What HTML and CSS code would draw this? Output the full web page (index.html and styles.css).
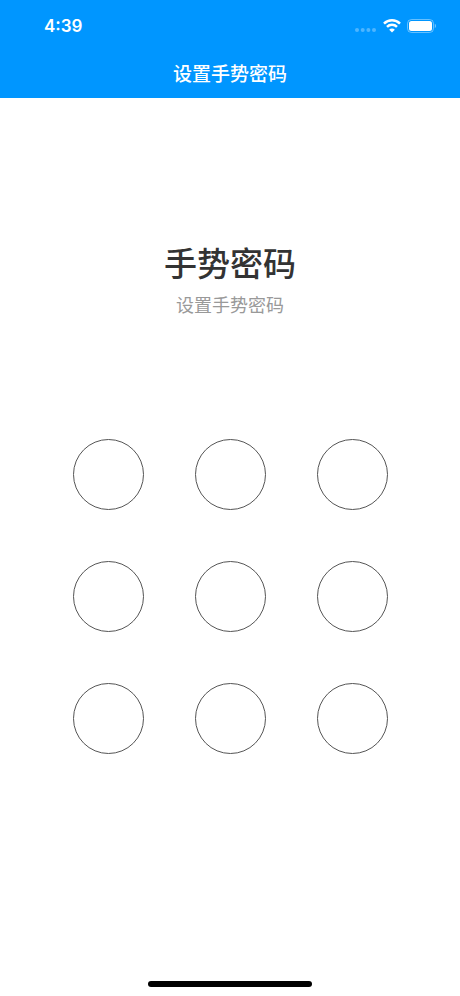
FILE: index.html
```
<!DOCTYPE html>
<html lang="zh-CN">
<head>
  <meta charset="UTF-8">
  <meta name="viewport" content="width=device-width, initial-scale=1">
  <title>设置手势密码</title>
  <link rel="stylesheet" href="styles.css">
</head>
<body>

<header class="header">
  <div class="status">
    <span class="time">4:39</span>
    <div class="status-icons">
      <svg class="signal" width="22" height="5" viewBox="0 0 22 5">
        <circle cx="2" cy="2" r="2"/>
        <circle cx="7.7" cy="2" r="2"/>
        <circle cx="13.4" cy="2" r="2"/>
        <circle cx="19" cy="2" r="2"/>
      </svg>
      <svg width="18" height="14" viewBox="0 0 18 14" fill="none" stroke="#fff" stroke-width="2.5">
        <path d="M1 4.6a11.4 11.4 0 0 1 16 0"/>
        <path d="M4 7.9a7.1 7.1 0 0 1 10 0"/>
        <path d="M9 13.5l-2.8-2.8a3.9 3.9 0 0 1 5.6 0z" fill="#fff" stroke="none"/>
      </svg>
      <svg width="29" height="14" viewBox="0 0 29 14">
        <rect x="0.5" y="0.5" width="26" height="13" rx="4" fill="none" stroke="#fff" stroke-opacity="0.4"/>
        <rect x="2" y="2" width="23" height="10" rx="2.5" fill="#fff"/>
        <path d="M27.8 4.8c1.4.6 1.4 3.8 0 4.4z" fill="#fff" fill-opacity="0.5"/>
      </svg>
    </div>
  </div>
  <div class="nav">设置手势密码</div>
</header>

<main class="content">
  <h1>手势密码</h1>
  <p class="hint">设置手势密码</p>

  <div class="lock">
    <button class="dot" aria-label="1"></button>
    <button class="dot" aria-label="2"></button>
    <button class="dot" aria-label="3"></button>
    <button class="dot" aria-label="4"></button>
    <button class="dot" aria-label="5"></button>
    <button class="dot" aria-label="6"></button>
    <button class="dot" aria-label="7"></button>
    <button class="dot" aria-label="8"></button>
    <button class="dot" aria-label="9"></button>
  </div>
</main>

<div class="home-bar"></div>

</body>
</html>
```
FILE: styles.css
```
* { box-sizing: border-box; }
body {
  margin: 0;
  min-height: 100vh;
  display: flex;
  flex-direction: column;
  background: #fff;
  color: #333;
  font-family: "Noto Sans CJK SC", sans-serif;
}

.header { background: #0096ff; color: #fff; }
.status {
  display: flex;
  justify-content: space-between;
  align-items: center;
  height: 51px;
  padding: 0 24px 0 44px;
}
.time { font: 600 17px/24px Inter, sans-serif; }
.status-icons { display: flex; align-items: center; gap: 6px; }
.signal { fill: #fff; fill-opacity: 0.3; align-self: flex-end; }
.nav {
  height: 47px;
  line-height: 44px;
  text-align: center;
  font-size: 19px;
  font-weight: 500;
}

.content { flex: 1; padding-top: 139px; text-align: center; }
h1 { margin: 0; font-size: 33px; line-height: 50px; font-weight: 500; }
.hint { margin: 4px 0 0; font-size: 18px; line-height: 26px; color: #999; }

/* 3x3 手势点阵 */
.lock {
  display: grid;
  grid-template-columns: repeat(3, 1fr);
  gap: 51px;
  max-width: 460px;
  margin: 0 auto;
  padding: 122px 72px 40px 73px;
}
.dot {
  aspect-ratio: 1;
  padding: 0;
  border: 1px solid #555;
  border-radius: 50%;
  background: none;
}

.home-bar {
  width: 164px;
  height: 6px;
  margin: 0 auto 9px;
  border-radius: 3px;
  background: #000;
}
```
